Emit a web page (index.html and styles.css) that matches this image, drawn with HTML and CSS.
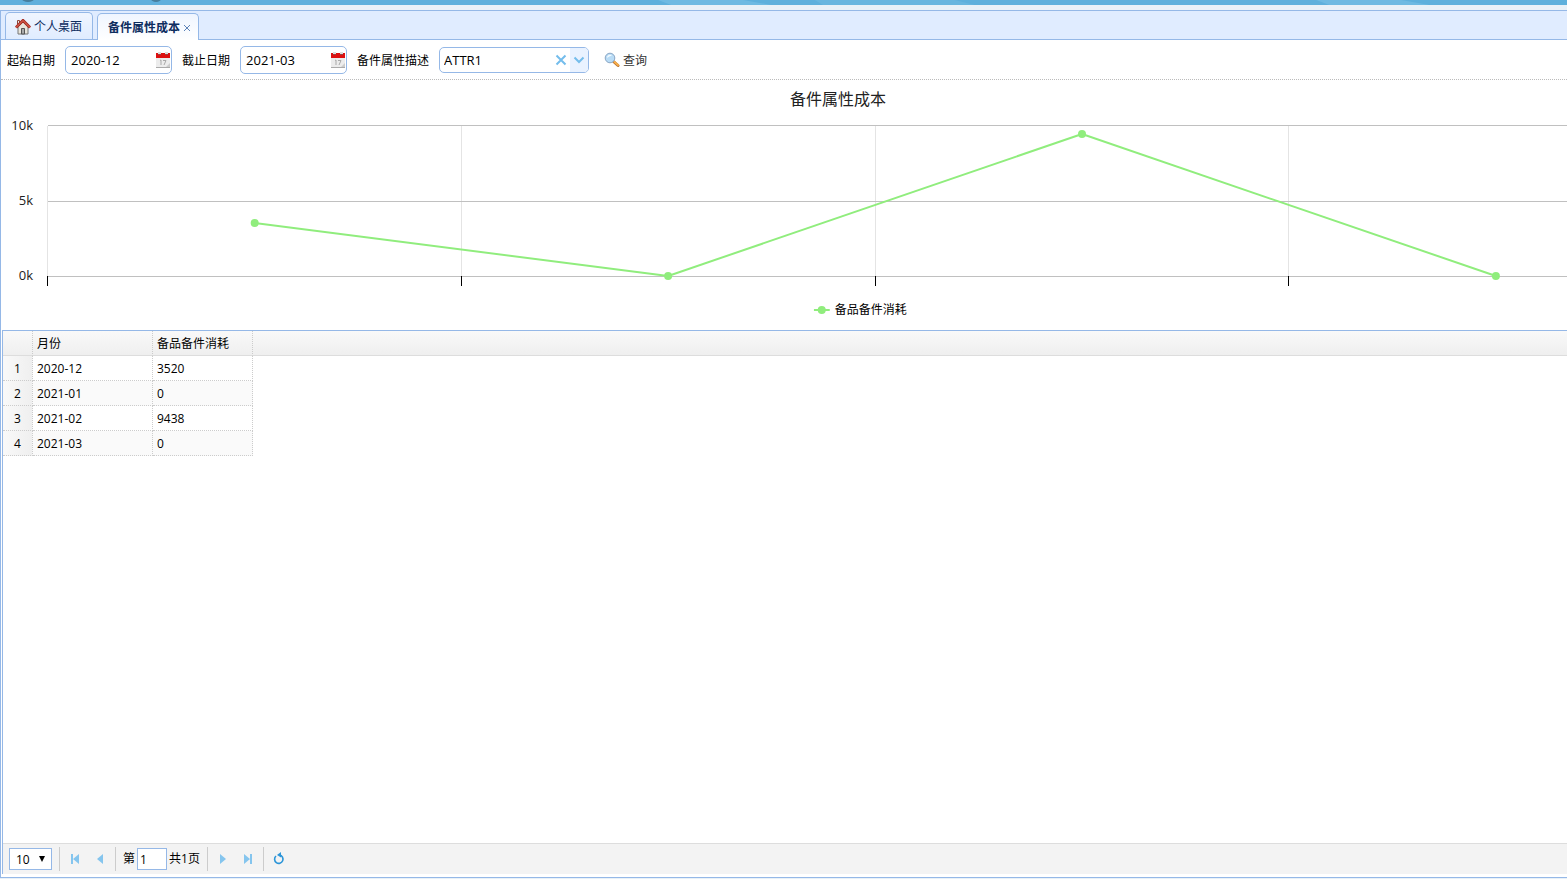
FILE: index.html
```html
<!DOCTYPE html>
<html lang="zh-CN">
<head>
<meta charset="utf-8">
<title>备件属性成本</title>
<link rel="stylesheet" href="styles.css">
</head>
<body>
<svg class="defs" aria-hidden="true">
  <symbol id="calendar" viewBox="0 0 16 18">
    <path d="M1 6h14v11H1z" fill="#ececec"/>
    <path d="M1 16.500h14" stroke="#aaa"/>
    <path d="M1 2h14v5H1z" fill="#dd1010"/>
    <path d="M3 1h3v3H3zM10 1h3v3h-3z" fill="#ddd"/>
    <path d="M3 3.500h3M10 3.500h3" stroke="#984040"/>
    <path d="M5 9.500l1-.5v5M8 9.500h3l-2 4.500" stroke="#aaa" fill="none"/>
    <path d="M11 16l4-4v4z" fill="#ccc"/>
  </symbol>
</svg>
<header class="banner">
  <svg width="100%" height="5" aria-hidden="true">
    <svg x="42%" width="110" height="5" overflow="visible"><path d="M0 0h85l28 5H13z" fill="#6ebae2"/></svg>
    <svg x="52%" width="150" height="5" overflow="visible"><path d="M0 0h140l20 5H8z" fill="#68b6df"/></svg>
    <svg x="84%" width="110" height="5" overflow="visible"><path d="M0 0h85l28 5H13z" fill="#6ebae2"/></svg>
    <ellipse cx="28" cy="-1" rx="6" ry="3" fill="#457f9e"/>
    <ellipse cx="156" cy="-1" rx="5" ry="3" fill="#457f9e"/>
  </svg>
</header>
<main class="workspace">
  <nav class="tabs">
    <button class="tab" type="button">
      <svg width="16" height="16" viewBox="0 0 16 16" aria-hidden="true">
        <path d="M3 7.500L8 3l5 4.500V15H3z" fill="#e8e5dc" stroke="#777"/>
        <path d="M6.500 9.500h3V15h-3z" fill="#aaa" stroke="#555"/>
        <path d="M2.500 5V1.500h2V4" fill="#eee" stroke="#8b4438"/>
        <path d="M1 8.500l7-7 7 7" fill="none" stroke="#a32a1f" stroke-width="3"/>
        <path d="M1 8.500l7-7 7 7" fill="none" stroke="#ee7563"/>
      </svg>
      <span>个人桌面</span>
    </button>
    <div class="tab tab-active">
      <span>备件属性成本</span>
      <button class="tab-close" type="button" aria-label="关闭">
        <svg width="8" height="8" viewBox="0 0 8 8"><path d="M1 1l6 6M7 1L1 7" stroke="#5d83b8"/></svg>
      </button>
    </div>
  </nav>
  <form class="filters">
    <label for="start">起始日期</label>
    <div class="field date">
      <input id="start" type="text" value="2020-12">
      <button type="button" aria-label="选择日期"><svg width="16" height="18"><use href="#calendar"/></svg></button>
    </div>
    <label for="end">截止日期</label>
    <div class="field date">
      <input id="end" type="text" value="2021-03">
      <button type="button" aria-label="选择日期"><svg width="16" height="18"><use href="#calendar"/></svg></button>
    </div>
    <label for="attr">备件属性描述</label>
    <div class="field combo">
      <input id="attr" type="text" value="ATTR1">
      <button class="clear" type="button" aria-label="清除"><svg width="18" height="18" viewBox="0 0 18 18"><path d="M4.500 4.500l9 9M13.500 4.500l-9 9" stroke="#74bdec" stroke-width="2"/></svg></button>
      <button class="drop" type="button" aria-label="展开"><svg width="18" height="18" viewBox="0 0 18 18"><path d="M4.500 6.500L9 11l4.500-4.500" fill="none" stroke="#74bdec" stroke-width="2"/></svg></button>
    </div>
    <button class="search" type="button">
      <svg width="16" height="16" viewBox="0 0 16 16" aria-hidden="true">
        <path d="M9.500 9.500l4.500 4" stroke="#b8702c" stroke-width="3" stroke-linecap="round"/>
        <path d="M10.500 10l3.500 3" stroke="#f6ad4b" stroke-width="2" stroke-linecap="round"/>
        <circle cx="6" cy="6" r="4.800" fill="#b9dcf6" stroke="#8aa6c4"/>
        <path d="M3 6a3 3 0 0 1 5-2.500C6 4 4.500 5 3 6z" fill="#f2faff"/>
      </svg>
      <span>查询</span>
    </button>
  </form>
  <section class="chart">
    <svg width="100%" height="250" role="img" aria-label="备件属性成本">
      <text class="chart-title" x="53.450%" y="25">备件属性成本</text>
      <g class="cat-lines">
        <line x1="46.500" x2="46.500" y1="46" y2="196"/>
        <line x1="29.400%" x2="29.400%" y1="46" y2="196"/>
        <line x1="55.850%" x2="55.850%" y1="46" y2="196"/>
        <line x1="82.220%" x2="82.220%" y1="46" y2="196"/>
      </g>
      <g class="value-lines">
        <line x1="47" x2="100%" y1="45.500" y2="45.500"/>
        <line x1="47" x2="100%" y1="121.500" y2="121.500"/>
        <line x1="47" x2="100%" y1="196.500" y2="196.500"/>
      </g>
      <g class="ticks">
        <line x1="46.500" x2="46.500" y1="196" y2="206"/>
        <line x1="29.400%" x2="29.400%" y1="196" y2="206"/>
        <line x1="55.850%" x2="55.850%" y1="196" y2="206"/>
        <line x1="82.220%" x2="82.220%" y1="196" y2="206"/>
      </g>
      <g class="axis-labels">
        <text x="32" y="50">10k</text>
        <text x="32" y="125">5k</text>
        <text x="32" y="200">0k</text>
      </g>
      <g class="series">
        <line x1="16.200%" y1="143" x2="42.600%" y2="196"/>
        <line x1="42.600%" y1="196" x2="69.030%" y2="54"/>
        <line x1="69.030%" y1="54" x2="95.460%" y2="196"/>
        <circle cx="16.200%" cy="143" r="4"/>
        <circle cx="42.600%" cy="196" r="4"/>
        <circle cx="69.030%" cy="54" r="4"/>
        <circle cx="95.460%" cy="196" r="4"/>
      </g>
      <svg class="legend" x="51.900%" y="216" width="110" height="28">
        <g class="series"><line x1="0" x2="16" y1="14" y2="14"/><circle cx="8" cy="14" r="4"/></g>
        <text x="21" y="18">备品备件消耗</text>
      </svg>
    </svg>
  </section>
  <section class="grid">
    <div class="grid-body">
      <table>
        <colgroup><col class="c-num"><col class="c-month"><col class="c-cost"><col></colgroup>
        <thead><tr><th></th><th>月份</th><th>备品备件消耗</th><th></th></tr></thead>
        <tbody>
          <tr><th>1</th><td>2020-12</td><td>3520</td></tr>
          <tr><th>2</th><td>2021-01</td><td>0</td></tr>
          <tr><th>3</th><td>2021-02</td><td>9438</td></tr>
          <tr><th>4</th><td>2021-03</td><td>0</td></tr>
        </tbody>
      </table>
    </div>
    <footer class="pager">
      <div class="page-size">
        <select aria-label="每页条数"><option>10</option></select>
        <svg width="8" height="8" viewBox="0 0 8 8" aria-hidden="true"><path d="M1 1h6L4 7z" fill="#000"/></svg>
      </div>
      <span class="sep"></span>
      <button type="button" aria-label="首页"><svg width="16" height="16" viewBox="0 0 16 16"><path d="M4 3h2v10H4zM12 3v10L6 8z" fill="#85c5ee"/></svg></button>
      <button type="button" aria-label="上一页"><svg width="16" height="16" viewBox="0 0 16 16"><path d="M11 3v10L5 8z" fill="#85c5ee"/></svg></button>
      <span class="sep"></span>
      <label class="page-no">第<input type="text" value="1" aria-label="页码">共1页</label>
      <span class="sep"></span>
      <button type="button" aria-label="下一页"><svg width="16" height="16" viewBox="0 0 16 16"><path d="M5 3v10l6-5z" fill="#85c5ee"/></svg></button>
      <button type="button" aria-label="末页"><svg width="16" height="16" viewBox="0 0 16 16"><path d="M4 3v10l6-5zM10 3h2v10h-2z" fill="#85c5ee"/></svg></button>
      <span class="sep"></span>
      <button type="button" aria-label="刷新"><svg width="16" height="16" viewBox="0 0 16 16"><path d="M8.500 4A4.200 4.200 0 1 1 5 5" fill="none" stroke="#2b95d8" stroke-width="1.600"/><path d="M10 1v5.500L6 4z" fill="#2b95d8"/></svg></button>
    </footer>
  </section>
</main>
</body>
</html>
```
FILE: styles.css
```css
* { box-sizing: border-box; }
body {
  margin: 0;
  height: 100vh;
  display: flex;
  flex-direction: column;
  overflow: hidden;
  background: #e8f1f8;
  color: #000;
  font: 12px/16px "Open Sans", "Noto Sans CJK SC", sans-serif;
}
button, input, select { font: inherit; color: inherit; margin: 0; }
button { padding: 0; border: 0; background: none; }
svg { display: block; flex: none; }
.defs { position: absolute; width: 0; height: 0; }

.banner { height: 5px; margin-bottom: 5px; background: #5eb0dc; }
.workspace {
  flex: 1;
  min-height: 0;
  display: flex;
  flex-direction: column;
  margin-bottom: 1px;
  border: 1px solid #95b8e7;
  border-right: 0;
  background: #fff;
}

.tabs {
  height: 29px;
  display: flex;
  align-items: flex-end;
  gap: 4px;
  padding-left: 4px;
  background: #e0ecff;
  border-bottom: 1px solid #95b8e7;
}
.tab {
  height: 27px;
  display: flex;
  align-items: center;
  gap: 3px;
  padding: 2px 10px 0 9px;
  border: 1px solid #95b8e7;
  border-bottom: 0;
  border-radius: 5px 5px 0 0;
  background: linear-gradient(#eff5ff, #e0ecff);
  color: #0e2d5f;
}
.tab-active {
  margin-bottom: -1px;
  padding-right: 7px;
  padding-left: 10px;
  background: linear-gradient(#eff5ff, #fff);
  font-weight: bold;
}

.filters {
  height: 40px;
  display: flex;
  align-items: center;
  gap: 10px;
  padding-left: 6px;
  border-bottom: 1px dotted #bbb;
}
.filters label, .search span { padding-top: 2px; }
.field {
  display: flex;
  align-items: center;
  border: 1px solid #95b8e7;
  border-radius: 5px;
  overflow: hidden;
  font-size: 13px;
}
.field input {
  flex: 1;
  min-width: 0;
  padding: 0 0 0 5px;
  border: 0;
  outline: 0;
  background: none;
}
.date { width: 107px; height: 28px; }
.combo { width: 150px; height: 26px; }
.combo input { padding-left: 4px; }
.drop { align-self: stretch; background: #e9f2ff; }
.search { display: flex; align-items: center; gap: 3px; margin-left: 5px; color: #333; }

.chart { height: 250px; }
.chart-title { font-size: 16px; text-anchor: middle; fill: #222; }
.cat-lines, .value-lines, .ticks { shape-rendering: crispEdges; }
.cat-lines { stroke: #e4e4e4; }
.value-lines { stroke: #c0c0c0; }
.ticks { stroke: #000; }
.axis-labels { font-size: 13px; text-anchor: end; fill: #222; }
.series { stroke: #90ed7d; stroke-width: 2; fill: #90ed7d; }
.series circle { stroke: none; }

.grid {
  flex: 1;
  min-height: 0;
  display: flex;
  flex-direction: column;
  margin: 0 0 3px 1px;
  border: 1px solid #95b8e7;
  border-width: 1px 0 0 1px;
}
.grid-body { flex: 1; min-height: 0; overflow: hidden; }
table { width: 100%; table-layout: fixed; border-collapse: separate; border-spacing: 0; }
.c-num { width: 30px; }
.c-month { width: 120px; }
.c-cost { width: 100px; }
th, td {
  height: 25px;
  padding: 2px 4px 0;
  border: 0 dotted #ccc;
  border-width: 0 1px 1px 0;
  text-align: left;
  font-weight: normal;
}
thead th { background: linear-gradient(#f9f9f9, #efefef); border-bottom: 1px solid #ddd; }
thead th:not(:last-child) { border-right: 1px dotted #ccc; }
thead th:last-child { border-right: 0; }
tbody th { text-align: center; background: linear-gradient(90deg, #f9f9f9, #efefef); }
tbody tr:nth-child(even) td { background: #fafafa; }

.pager {
  height: 31px;
  display: flex;
  align-items: center;
  padding-left: 6px;
  border-top: 1px solid #ddd;
  background: #f3f3f3;
}
.page-size { position: relative; }
.page-size select {
  display: block;
  width: 43px;
  height: 22px;
  padding: 2px 6px 0;
  border: 1px solid #95b8e7;
  border-radius: 0;
  background: #fff;
  appearance: none;
}
.page-size svg { position: absolute; right: 6px; top: 7px; pointer-events: none; }
.sep { width: 1px; height: 24px; margin: 0 7px; background: #ccc; }
.pager button { width: 16px; }
.pager button + button { margin-left: 9px; }
.page-no { display: flex; align-items: center; gap: 2px; }
.page-no input {
  width: 30px;
  height: 22px;
  padding: 0 2px;
  border: 1px solid #95b8e7;
  background: #fff;
}
```
